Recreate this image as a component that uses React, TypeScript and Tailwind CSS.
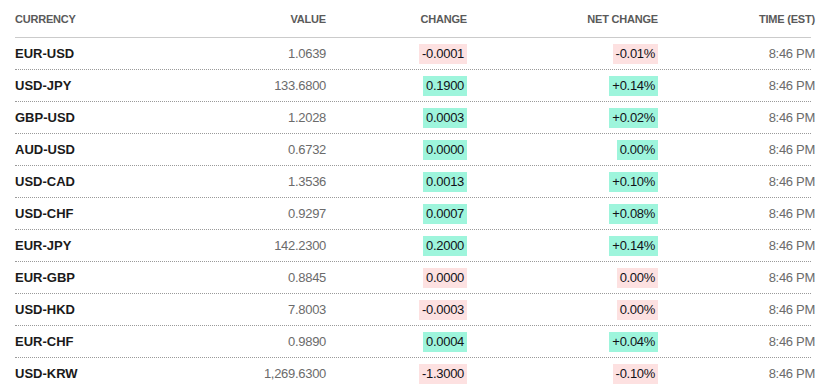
const rows = [
  { pair: 'EUR-USD', value: '1.0639', change: '-0.0001', net: '-0.01%', up: false },
  { pair: 'USD-JPY', value: '133.6800', change: '0.1900', net: '+0.14%', up: true },
  { pair: 'GBP-USD', value: '1.2028', change: '0.0003', net: '+0.02%', up: true },
  { pair: 'AUD-USD', value: '0.6732', change: '0.0000', net: '0.00%', up: true },
  { pair: 'USD-CAD', value: '1.3536', change: '0.0013', net: '+0.10%', up: true },
  { pair: 'USD-CHF', value: '0.9297', change: '0.0007', net: '+0.08%', up: true },
  { pair: 'EUR-JPY', value: '142.2300', change: '0.2000', net: '+0.14%', up: true },
  { pair: 'EUR-GBP', value: '0.8845', change: '0.0000', net: '0.00%', up: false },
  { pair: 'USD-HKD', value: '7.8003', change: '-0.0003', net: '0.00%', up: false },
  { pair: 'EUR-CHF', value: '0.9890', change: '0.0004', net: '+0.04%', up: true },
  { pair: 'USD-KRW', value: '1,269.6300', change: '-1.3000', net: '-0.10%', up: false },
]

const cols = 'grid grid-cols-[165px_146px_141px_191px_157px]'

export default function App() {
  return (
    <div className="w-[826px] h-[388px] overflow-hidden bg-white px-[15px] font-['Liberation_Sans',Arial,sans-serif]">
      <div className={`${cols} h-[38px] items-center border-b border-[#cbcbcb] pt-[2px] text-[11px] font-bold tracking-[-0.2px] text-[#5a5a5a]`}>
        <div>CURRENCY</div>
        <div className="text-right">VALUE</div>
        <div className="text-right">CHANGE</div>
        <div className="text-right">NET CHANGE</div>
        <div className="text-right">TIME (EST)</div>
      </div>
      {rows.map((r, idx) => {
        const bg = r.up ? 'bg-[#9ef5dc]' : 'bg-[#fde1e1]'
        return (
          <div
            key={idx}
            className={`${cols} h-[32px] items-center border-b border-dotted border-[#9a9a9a] text-[13px] tracking-[-0.3px]`}
          >
            <div className="font-bold text-[#1a1a1a] tracking-normal">{r.pair}</div>
            <div className="text-right text-[#6b6b6b]">{r.value}</div>
            <div className="flex justify-end">
              <span className={`${bg} h-[20px] px-[3px] leading-[20px] text-[#111118]`}>{r.change}</span>
            </div>
            <div className="flex justify-end">
              <span className={`${bg} h-[20px] px-[3px] leading-[20px] text-[#111118]`}>{r.net}</span>
            </div>
            <div className="text-right text-[#6b6b6b]">8:46 PM</div>
          </div>
        )
      })}
    </div>
  )
}
